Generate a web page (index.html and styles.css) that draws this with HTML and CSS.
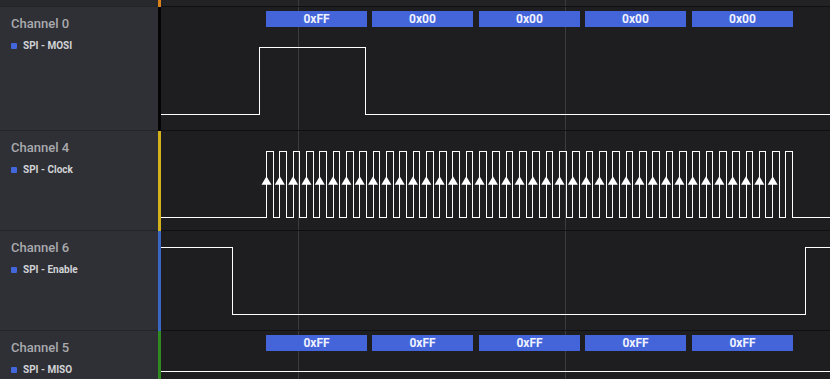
FILE: index.html
```html
<!DOCTYPE html>
<html lang="en">
<head>
<meta charset="utf-8">
<title>Logic Analyzer - SPI</title>
<link rel="stylesheet" href="styles.css">
</head>
<body>
<div class="app">
  <div class="row row-top">
    <div class="label"></div>
    <div class="bar bar-orange"></div>
    <div class="plot"></div>
  </div>

  <div class="row row-ch0">
    <div class="label">
      <div class="ch-name">Channel 0</div>
      <div class="ch-proto"><span class="dot"></span>SPI - MOSI</div>
    </div>
    <div class="bar bar-black"></div>
    <div class="plot">
      <svg class="wave" width="669" height="123" viewBox="0 0 669 123">
        <g class="bubbles">
          <rect x="105" y="4" width="101" height="16"/><text x="155.5" y="15.8">0xFF</text>
          <rect x="211" y="4" width="101" height="16"/><text x="261.5" y="15.8">0x00</text>
          <rect x="318" y="4" width="101" height="16"/><text x="368.5" y="15.8">0x00</text>
          <rect x="424" y="4" width="101" height="16"/><text x="474.5" y="15.8">0x00</text>
          <rect x="531" y="4" width="101" height="16"/><text x="581.5" y="15.8">0x00</text>
        </g>
        <path class="sig" d="M0,107.5 H98.5 V40.5 H204.5 V107.5 H669"/>
      </svg>
    </div>
  </div>

  <div class="row row-ch">
    <div class="label">
      <div class="ch-name">Channel 4</div>
      <div class="ch-proto"><span class="dot"></span>SPI - Clock</div>
    </div>
    <div class="bar bar-yellow"></div>
    <div class="plot">
      <svg class="wave" width="669" height="99" viewBox="0 0 669 99">
        <path class="sig" d="M0,86.5 H105.5
          V20.5h6.66V86.5h6.66 V20.5h6.66V86.5h6.66 V20.5h6.66V86.5h6.66 V20.5h6.66V86.5h6.66 V20.5h6.66V86.5h6.66 V20.5h6.66V86.5h6.66 V20.5h6.66V86.5h6.66 V20.5h6.66V86.5h6.66
          V20.5h6.66V86.5h6.66 V20.5h6.66V86.5h6.66 V20.5h6.66V86.5h6.66 V20.5h6.66V86.5h6.66 V20.5h6.66V86.5h6.66 V20.5h6.66V86.5h6.66 V20.5h6.66V86.5h6.66 V20.5h6.66V86.5h6.66
          V20.5h6.66V86.5h6.66 V20.5h6.66V86.5h6.66 V20.5h6.66V86.5h6.66 V20.5h6.66V86.5h6.66 V20.5h6.66V86.5h6.66 V20.5h6.66V86.5h6.66 V20.5h6.66V86.5h6.66 V20.5h6.66V86.5h6.66
          V20.5h6.66V86.5h6.66 V20.5h6.66V86.5h6.66 V20.5h6.66V86.5h6.66 V20.5h6.66V86.5h6.66 V20.5h6.66V86.5h6.66 V20.5h6.66V86.5h6.66 V20.5h6.66V86.5h6.66 V20.5h6.66V86.5h6.66
          V20.5h6.66V86.5h6.66 V20.5h6.66V86.5h6.66 V20.5h6.66V86.5h6.66 V20.5h6.66V86.5h6.66 V20.5h6.66V86.5h6.66 V20.5h6.66V86.5h6.66 V20.5h6.66V86.5h6.66 V20.5h6.66V86.5
          H669"/>
        <path class="arrows" d="M105.5,45.2l5,8.6h-10z
          m13.32,0l5,8.6h-10z m13.32,0l5,8.6h-10z m13.32,0l5,8.6h-10z m13.32,0l5,8.6h-10z m13.32,0l5,8.6h-10z m13.32,0l5,8.6h-10z m13.32,0l5,8.6h-10z
          m13.32,0l5,8.6h-10z m13.32,0l5,8.6h-10z m13.32,0l5,8.6h-10z m13.32,0l5,8.6h-10z m13.32,0l5,8.6h-10z m13.32,0l5,8.6h-10z m13.32,0l5,8.6h-10z m13.32,0l5,8.6h-10z
          m13.32,0l5,8.6h-10z m13.32,0l5,8.6h-10z m13.32,0l5,8.6h-10z m13.32,0l5,8.6h-10z m13.32,0l5,8.6h-10z m13.32,0l5,8.6h-10z m13.32,0l5,8.6h-10z m13.32,0l5,8.6h-10z
          m13.32,0l5,8.6h-10z m13.32,0l5,8.6h-10z m13.32,0l5,8.6h-10z m13.32,0l5,8.6h-10z m13.32,0l5,8.6h-10z m13.32,0l5,8.6h-10z m13.32,0l5,8.6h-10z m13.32,0l5,8.6h-10z
          m13.32,0l5,8.6h-10z m13.32,0l5,8.6h-10z m13.32,0l5,8.6h-10z m13.32,0l5,8.6h-10z m13.32,0l5,8.6h-10z m13.32,0l5,8.6h-10z m13.32,0l5,8.6h-10z"/>
      </svg>
    </div>
  </div>

  <div class="row row-ch">
    <div class="label">
      <div class="ch-name">Channel 6</div>
      <div class="ch-proto"><span class="dot"></span>SPI - Enable</div>
    </div>
    <div class="bar bar-blue"></div>
    <div class="plot">
      <svg class="wave" width="669" height="99" viewBox="0 0 669 99">
        <path class="sig" d="M0,16.5 H71.5 V83.5 H644.5 V16.5 H669"/>
      </svg>
    </div>
  </div>

  <div class="row row-last">
    <div class="label">
      <div class="ch-name">Channel 5</div>
      <div class="ch-proto"><span class="dot"></span>SPI - MISO</div>
    </div>
    <div class="bar bar-green"></div>
    <div class="plot">
      <svg class="wave" width="669" height="48" viewBox="0 0 669 48">
        <g class="bubbles">
          <rect x="105" y="4" width="101" height="16"/><text x="155.5" y="15.8">0xFF</text>
          <rect x="211" y="4" width="101" height="16"/><text x="261.5" y="15.8">0xFF</text>
          <rect x="318" y="4" width="101" height="16"/><text x="368.5" y="15.8">0xFF</text>
          <rect x="424" y="4" width="101" height="16"/><text x="474.5" y="15.8">0xFF</text>
          <rect x="531" y="4" width="101" height="16"/><text x="581.5" y="15.8">0xFF</text>
        </g>
        <path class="sig" d="M0,40.5 H669"/>
      </svg>
    </div>
  </div>
</div>
</body>
</html>
```
FILE: styles.css
```css
* { box-sizing: border-box; }

html, body {
  margin: 0;
  padding: 0;
  background: #1e1e20;
}

body {
  width: 830px;
  height: 379px;
  overflow: hidden;
  font-family: Roboto, "Noto Sans", "Liberation Sans", sans-serif;
}

.app {
  display: flex;
  flex-direction: column;
  height: 379px;
}

.row {
  display: flex;
  flex: none;
}

.row-top { height: 7px; }
.row-ch0 { height: 124px; }
.row-ch { height: 100px; }
.row-last { flex: 1; }

.label {
  width: 158px;
  flex: none;
  background: #2f3035;
  border-bottom: 1px solid #232428;
  padding: 9px 0 0 11px;
}

.row-top .label {
  background: #28292d;
  padding: 0;
}

.row-last .label { border-bottom: none; }

.bar {
  width: 3px;
  flex: none;
}

.bar-orange { background: #d9821c; }
.bar-black { background: #050505; }
.bar-yellow { background: #d3b21b; }
.bar-blue { background: #3a66c4; }
.bar-green { background: #2f8a1f; }

.plot {
  flex: 1;
  min-width: 0;
  background-color: #1e1e20;
  background-image:
    linear-gradient(#3b3b3f, #3b3b3f),
    linear-gradient(#3b3b3f, #3b3b3f);
  background-size: 1px 100%, 1px 100%;
  background-position: 137px 0, 404px 0;
  background-repeat: no-repeat;
  border-bottom: 1px solid #101012;
}

.row-top .plot { background-color: #222224; }
.row-last .plot { border-bottom: none; }

.ch-name {
  font-size: 13px;
  line-height: 16px;
  font-weight: 500;
  color: #a9aaae;
}

.ch-proto {
  display: flex;
  align-items: center;
  gap: 6px;
  margin-top: 8px;
  font-size: 10px;
  line-height: 12px;
  font-weight: 700;
  color: #d2d3d6;
}

.dot {
  width: 6px;
  height: 6px;
  border-radius: 1px;
  background: #4466dd;
  flex: none;
}

.wave {
  display: block;
}

.sig {
  fill: none;
  stroke: #ffffff;
  stroke-width: 1;
  shape-rendering: crispEdges;
}

.arrows {
  fill: #ffffff;
  stroke: none;
}

.bubbles rect {
  fill: #4465d9;
  shape-rendering: crispEdges;
}

.bubbles text {
  fill: #eef1ff;
  font-family: Roboto, "Noto Sans", "Liberation Sans", sans-serif;
  font-size: 12px;
  font-weight: 700;
  text-anchor: middle;
}
```
